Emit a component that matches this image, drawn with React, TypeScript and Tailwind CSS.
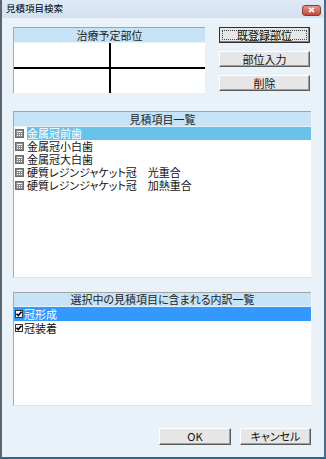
import React from "react";

const estimateItems = [
    "金属冠前歯",
    "金属冠小白歯",
    "金属冠大白歯",
    "硬質レジンジャケット冠　光重合",
    "硬質レジンジャケット冠　加熱重合",
];

const breakdownItems = ["冠形成", "冠装着"];

function ItemIcon() {
    return (
        <svg width="9" height="9" viewBox="0 0 9 9" className="shrink-0">
            <rect x="0.5" y="0.5" width="8" height="8" fill="#8a8a8a" stroke="#6a6a6a" />
            <rect x="2" y="2" width="5" height="1" fill="#fff" />
            <rect x="2" y="4" width="1" height="1" fill="#fff" />
            <rect x="4" y="4" width="1" height="1" fill="#fff" />
            <rect x="6" y="4" width="1" height="1" fill="#fff" />
            <rect x="2" y="6" width="1" height="1" fill="#fff" />
            <rect x="4" y="6" width="1" height="1" fill="#fff" />
            <rect x="6" y="6" width="1" height="1" fill="#fff" />
        </svg>
    );
}

function CheckIcon() {
    return (
        <svg width="8" height="8" viewBox="0 0 8 8" className="shrink-0">
            <rect x="0.5" y="0.5" width="7" height="7" fill="#fff" stroke="#333" />
            <path d="M1.5 3.8 L3.2 5.6 L6.5 1.8" fill="none" stroke="#000" strokeWidth="1.6" />
        </svg>
    );
}

function Header({ label, h }: { label: string; h: string }) {
    return (
        <div
            className={`${h} shrink-0 flex items-center justify-center bg-[#c6e3f7] border-t border-t-[#a3a3a3] border-b border-b-[#e4f2fb] text-[11px] leading-none text-[#222]`}
        >
            {label}
        </div>
    );
}

function Button({ label, focused, w }: { label: string; focused?: boolean; w: string }) {
    if (focused) {
        return (
            <div className={`${w} h-[16px] border border-[#303030] bg-[#e6e6e6] p-[2px] shadow-[inset_-1px_-1px_#808080]`}>
                <div className="h-full border border-dotted border-[#444] flex items-center justify-center text-[11px] leading-none text-[#111]">
                    {label}
                </div>
            </div>
        );
    }
    return (
        <div
            className={`${w} h-[16px] flex items-center justify-center bg-[#e6e6e6] border border-t-white border-l-white border-r-[#5a5a5a] border-b-[#5a5a5a] shadow-[inset_-1px_-1px_#a0a0a0] text-[11px] leading-none text-[#111]`}
        >
            {label}
        </div>
    );
}

export default function App() {
    return (
        <div className="w-[326px] h-[459px] flex flex-col bg-[#e9f1f9] border-l-2 border-l-[#5c6670] border-r-2 border-r-[#4a6a86] border-b-2 border-b-[#2a6a82] font-['Noto_Sans_CJK_JP',sans-serif] [font-feature-settings:'palt'] overflow-hidden">
            {/* title bar */}
            <div className="h-[18px] shrink-0 flex items-center justify-between pl-[4px] pr-[3px] bg-gradient-to-b from-[#dfeaf6] to-[#d2e0ef]">
                <span className="text-[9.5px] leading-none text-black">見積項目検索</span>
                <div className="w-[19px] h-[11px] mt-[2px] rounded-[3px] border border-[#8a3a30] bg-gradient-to-b from-[#e2978a] to-[#c2483a] flex items-center justify-center">
                    <svg width="7" height="6" viewBox="0 0 7 6">
                        <path d="M1 0.8 L6 5.2 M6 0.8 L1 5.2" stroke="#fff" strokeWidth="1.6" />
                    </svg>
                </div>
            </div>

            <div className="flex-1 flex flex-col pl-[11px] pt-[9px]">
                {/* top row */}
                <div className="flex gap-[14px]">
                    <div className="w-[192px] h-[66px] flex flex-col bg-white border-l border-l-[#a8a8a8]">
                        <Header label="治療予定部位" h="h-[16px]" />
                        <div className="flex-1 flex flex-col">
                            <div className="flex-1 flex">
                                <div className="w-[95px]" />
                                <div className="w-[2px] bg-black" />
                            </div>
                            <div className="h-[2px] bg-black" />
                            <div className="flex-1 flex">
                                <div className="w-[95px]" />
                                <div className="w-[2px] bg-black" />
                            </div>
                        </div>
                    </div>
                    <div className="flex flex-col gap-[8px]">
                        <Button label="既登録部位" focused w="w-[91px]" />
                        <Button label="部位入力" w="w-[91px]" />
                        <Button label="削除" w="w-[91px]" />
                    </div>
                </div>

                {/* estimate list */}
                <div className="mt-[18px] w-[299px] h-[167px] flex flex-col bg-white border-l border-l-[#a8a8a8] border-r border-r-[#f4f4f4] border-b border-b-[#e2e2e2]">
                    <Header label="見積項目一覧" h="h-[16px]" />
                    <div className="flex flex-col">
                        {estimateItems.map((item, i) => (
                            <div key={item} className="h-[13px] flex items-center pl-[1px] gap-[3px]">
                                <ItemIcon />
                                <span
                                    className={`h-[13px] flex items-center pr-[1px] text-[11px] leading-none ${
                                        i === 0 ? "bg-[#68c2ea] text-white flex-1" : "text-[#111]"
                                    }`}
                                >
                                    {item}
                                </span>
                            </div>
                        ))}
                    </div>
                </div>

                {/* breakdown list */}
                <div className="mt-[14px] w-[299px] h-[114px] flex flex-col bg-white border-l border-l-[#a8a8a8] border-r border-r-[#f4f4f4] border-b border-b-[#e2e2e2]">
                    <Header label="選択中の見積項目に含まれる内訳一覧" h="h-[15px]" />
                    <div className="flex flex-col">
                        {breakdownItems.map((item, i) => (
                            <div key={item} className={`h-[14px] flex items-center pl-[1px] gap-[1px] ${i === 0 ? "bg-[#3399ff]" : ""}`}>
                                <CheckIcon />
                                <span className={`text-[11px] leading-none ${i === 0 ? "text-white" : "text-[#111]"}`}>{item}</span>
                            </div>
                        ))}
                    </div>
                </div>

                {/* dialog buttons */}
                <div className="mt-[22px] w-[299px] flex justify-end gap-[9px] pr-[1px]">
                    <Button label="OK" w="w-[72px] !h-[17px]" />
                    <Button label="キャンセル" w="w-[71px] !h-[17px]" />
                </div>
            </div>
        </div>
    );
}
